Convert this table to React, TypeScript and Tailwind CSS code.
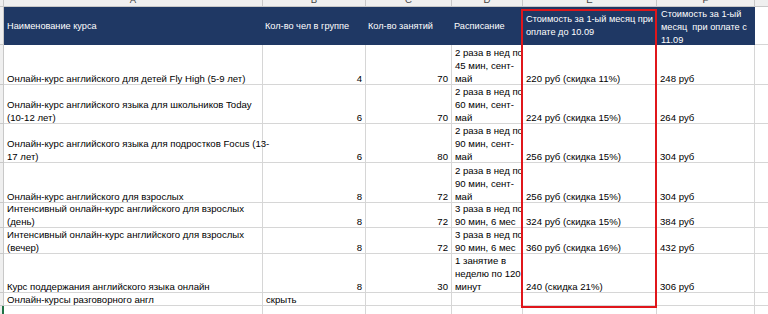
import React from "react";

type Row = {
  h: string;
  a: string[];
  b?: string;
  bLeft?: boolean;
  c?: string;
  d?: string[];
  e?: string;
  f?: string;
};

const rows: Row[] = [
  {
    h: "h-[40px]",
    a: ["Онлайн-курс английского для детей Fly High (5-9 лет)"],
    b: "4",
    c: "70",
    d: ["2 раза в нед по", "45 мин, сент-", "май"],
    e: "220 руб (скидка 11%)",
    f: "248 руб",
  },
  {
    h: "h-[39px]",
    a: ["Онлайн-курс английского языка для школьников Today", "(10-12 лет)"],
    b: "6",
    c: "70",
    d: ["2 раза в нед по", "60 мин, сент-", "май"],
    e: "224 руб (скидка 15%)",
    f: "264 руб",
  },
  {
    h: "h-[39px]",
    a: ["Онлайн-курс английского языка для подростков Focus (13-", "17 лет)"],
    b: "6",
    c: "80",
    d: ["2 раза в нед по", "90 мин, сент-", "май"],
    e: "256 руб (скидка 15%)",
    f: "304 руб",
  },
  {
    h: "h-[40px]",
    a: ["Онлайн-курс английского для взрослых"],
    b: "8",
    c: "72",
    d: ["2 раза в нед по", "90 мин, сент-", "май"],
    e: "256 руб (скидка 15%)",
    f: "304 руб",
  },
  {
    h: "h-[25px]",
    a: ["Интенсивный онлайн-курс английского для взрослых", "(день)"],
    b: "8",
    c: "72",
    d: ["3 раза в нед по", "90 мин, 6 мес"],
    e: "324 руб (скидка 15%)",
    f: "384 руб",
  },
  {
    h: "h-[26px]",
    a: ["Интенсивный онлайн-курс английского для взрослых", "(вечер)"],
    b: "8",
    c: "72",
    d: ["3 раза в нед по", "90 мин, 6 мес"],
    e: "360 руб (скидка 16%)",
    f: "432 руб",
  },
  {
    h: "h-[39px]",
    a: ["Курс поддержания английского языка онлайн"],
    b: "8",
    c: "30",
    d: ["1 занятие в", "неделю по 120", "минут"],
    e: "240 (скидка 21%)",
    f: "306 руб",
  },
  {
    h: "h-[13px]",
    a: ["Онлайн-курсы разговорного англ"],
    b: "скрыть",
    bLeft: true,
  },
  {
    h: "h-[14px]",
    a: [],
  },
];

const cols = [
  { w: "w-[259px]", l: "A" },
  { w: "w-[103px]", l: "B" },
  { w: "w-[86px]", l: "C" },
  { w: "w-[71px]", l: "D" },
  { w: "w-[134px]", l: "E" },
  { w: "w-[98px]", l: "F" },
  { w: "w-[40px]", l: "G" },
];

const cell =
  "shrink-0 border-r border-b border-[#d6d6d6] px-[3px] flex flex-col justify-end whitespace-nowrap";

const head =
  "shrink-0 bg-[#1f3864] text-white text-[9.2px] flex flex-col whitespace-nowrap";

function Lines({ lines }: { lines: string[] }) {
  return (
    <div className="-mb-px">
      {lines.map((t, i) => (
        <div key={i} className="whitespace-pre">
          {t}
        </div>
      ))}
    </div>
  );
}

export default function App() {
  return (
    <div
      className="relative w-[768px] h-[314px] overflow-hidden bg-white text-[9.6px] leading-[13px] text-black"
      style={{ fontFamily: "'Liberation Sans', Arial, sans-serif" }}
    >
      {/* column letters strip */}
      <div className="flex h-[7px] bg-[#efefef] border-b border-[#c8c8c8]">
        <div className="w-[4px] shrink-0 border-r border-[#c8c8c8]" />
        {cols.map((c) => (
          <div
            key={c.l}
            className={`${c.w} shrink-0 border-r border-[#c8c8c8] overflow-hidden`}
          >
            <div className="h-[16px] -mt-[9px] flex items-center justify-center text-[#444]">
              {c.l}
            </div>
          </div>
        ))}
      </div>

      {/* header row */}
      <div className="flex h-[38px]">
        <div className="w-[4px] shrink-0 bg-[#efefef] border-r border-b border-[#c8c8c8]" />
        <div className={`${head} justify-center w-[259px] px-[3px]`}>
          Наименование курса
        </div>
        <div className={`${head} justify-center w-[103px] px-[2px]`}>
          Кол-во чел в группе
        </div>
        <div className={`${head} justify-center w-[86px] px-[2px]`}>
          Кол-во занятий
        </div>
        <div className={`${head} justify-center w-[71px] px-[2px]`}>
          Расписание
        </div>
        <div className={`${head} justify-center w-[134px] px-[3px]`}>
          <div className="whitespace-pre">Стоимость за 1-ый месяц при</div>
          <div className="whitespace-pre">оплате до 10.09</div>
        </div>
        <div className={`${head} justify-start pt-[1px] w-[98px] px-[4px]`}>
          <div className="whitespace-pre">Стоимость за 1-ый</div>
          <div className="whitespace-pre">месяц  при оплате с</div>
          <div className="whitespace-pre">11.09</div>
        </div>
        <div className="w-[40px] shrink-0 border-r border-b border-[#d6d6d6]" />
      </div>

      {/* data rows */}
      {rows.map((r, i) => (
        <div key={i} className={`flex ${r.h}`}>
          <div
            className={`w-[4px] shrink-0 bg-[#efefef] border-b border-[#c8c8c8] ${
              i === rows.length - 1
                ? "border-r-2 border-r-[#217346]"
                : "border-r"
            }`}
          />
          <div className={`${cell} w-[259px]`}>
            <Lines lines={r.a} />
          </div>
          <div
            className={`${cell} w-[103px] ${
              r.bLeft ? "items-start px-[2px]" : "items-end"
            }`}
          >
            {r.b && <Lines lines={[r.b]} />}
          </div>
          <div className={`${cell} w-[86px] items-end`}>
            {r.c && <Lines lines={[r.c]} />}
          </div>
          <div className={`${cell} w-[71px] px-[2px]`}>
            {r.d && <Lines lines={r.d} />}
          </div>
          <div className={`${cell} w-[134px]`}>
            {r.e && <Lines lines={[r.e]} />}
          </div>
          <div className={`${cell} w-[98px]`}>
            {r.f && <Lines lines={[r.f]} />}
          </div>
          <div className={`${cell} w-[40px]`} />
        </div>
      ))}

      {/* red highlight box over column E */}
      <div className="absolute left-[521px] top-[9px] w-[136px] h-[299px] border-2 border-[#e0161b] pointer-events-none" />
    </div>
  );
}
